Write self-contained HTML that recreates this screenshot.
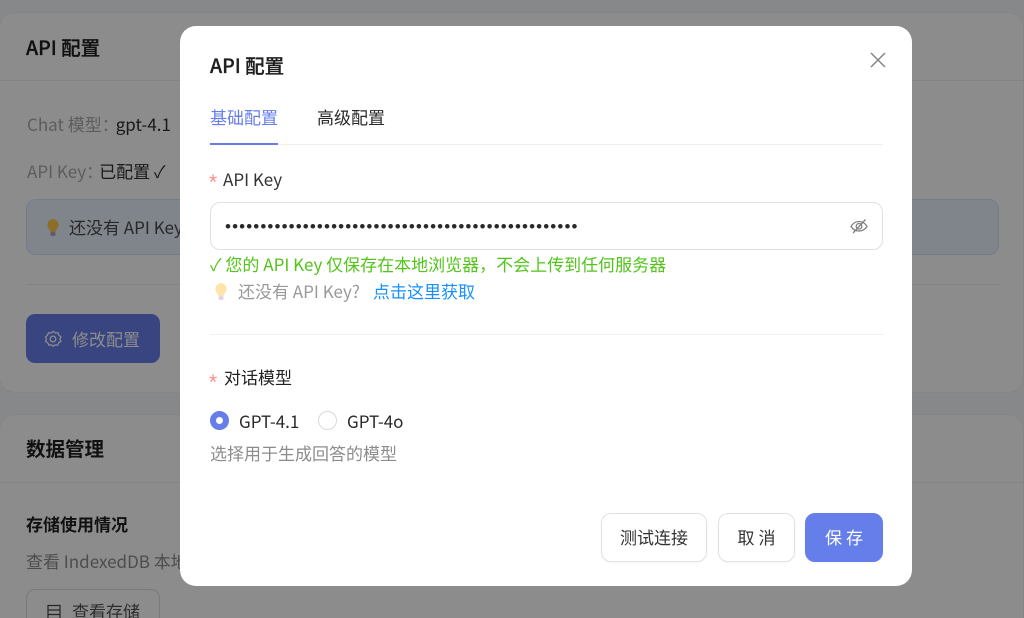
<!DOCTYPE html>
<html lang="zh-CN"><head><meta charset="utf-8"><title>API 配置</title>
<style>
html,body{margin:0;padding:0;width:1024px;height:618px;overflow:hidden;background:#f5f7fa}
body{position:relative;font-family:"Noto Sans CJK SC","Liberation Sans",sans-serif;font-size:17px;color:#2a2a2a}
.a{position:absolute;box-sizing:border-box}
.t{position:absolute;white-space:nowrap;line-height:24px}
.card{background:#fff;border:1px solid #f2f3f6;border-radius:16px;left:-1px;width:1025px}
.line{position:absolute;height:1px}
.star{position:absolute;font-family:"Liberation Sans",sans-serif;font-size:21px;line-height:24px;color:#ff8a8a}
.btn{border-radius:10px;position:absolute;box-sizing:border-box;text-align:center;background:#fff;border:1.5px solid #e2e2e2;line-height:46px;color:#333;box-shadow:0 1px 2px rgba(0,0,0,.04)}
</style></head><body>
<div class="a card" style="top:12px;height:381px"></div>
<div class="line" style="left:0;top:80px;width:1024px;background:#f0f0f0"></div>
<div class="t" style="left:26px;top:35px;font-size:19.500px;font-weight:500;-webkit-text-stroke:.3px #1f1f1f;color:#1f1f1f">API 配置</div>
<div class="t" style="left:27px;top:112px;color:#aaa">Chat 模型：<span style="color:#2f2f2f;margin-left:-3px">gpt-4.1</span></div>
<div class="t" style="left:27px;top:159px;color:#aaa">API Key：<span style="color:#2f2f2f;margin-left:-4px">已配置 ✓</span></div>
<div class="a" style="left:26px;top:199px;width:973px;height:56px;background:#e9f2ff;border:1px solid #d0e2ff;border-radius:10px"></div>
<svg class="a" style="left:45px;top:218px" width="16" height="20" viewBox="0 0 16 20"><path d="M8 1a6 6 0 0 0-4 10c1 1 1.500 2 1.500 3h5c0-1 .5-2 1.500-3A6 6 0 0 0 8 1z" fill="#ffc94a"/><rect x="5.500" y="14" width="5" height="4" rx="1" fill="#b5a3c4"/></svg>
<div class="t" style="left:69px;top:215px;color:#4a4a4a">还没有 API Key</div>
<div class="line" style="left:26px;top:284px;width:973px;background:#f0f0f0"></div>
<div class="a" style="left:26px;top:314px;width:134px;height:49px;background:#667eea;border-radius:9px"></div>
<svg class="a" style="left:44px;top:330px" width="18" height="18" viewBox="0 0 18 18" fill="none" stroke="#fff" stroke-width="1.300"><path d="M9 1.500l2 1.700 2.700-.3 1 2.500 2 1.700-1 2.300 1 2.300-2.300 1.300-1 2.400-2.700-.3-1.700 1.400-1.700-1.400-2.700.3-1-2.400L1.300 11.700l1-2.300-1-2.300 2-1.700 1-2.500 2.700.3z" transform="translate(.2 -.2)"/><circle cx="9" cy="9" r="2.800"/></svg>
<div class="t" style="left:72px;top:327px;color:#fff">修改配置</div>
<div class="a card" style="top:414px;height:230px"></div>
<div class="line" style="left:0;top:482px;width:1024px;background:#f0f0f0"></div>
<div class="t" style="left:26px;top:436px;font-size:19.500px;font-weight:700;color:#1f1f1f">数据管理</div>
<div class="t" style="left:26px;top:512px;font-size:17px;font-weight:700;color:#1f1f1f">存储使用情况</div>
<div class="t" style="left:26px;top:549px;color:#8c8c8c">查看 IndexedDB 本地</div>
<div class="a" style="left:26px;top:589px;width:134px;height:49px;border:1px solid #dcdcdc;border-radius:9px"></div>
<svg class="a" style="left:46px;top:604px" width="16" height="16" viewBox="0 0 16 16" fill="none" stroke="#444" stroke-width="1.200"><path d="M2 1.500h12v13H2zM2 6h12M2 10.500h12M5 3.800h.1M5 8.200h.1"/></svg>
<div class="t" style="left:72px;top:599px;color:#555">查看存储</div>
<div class="a" style="left:0;top:0;width:1024px;height:618px;background:rgba(0,0,0,.45)"></div>

<div class="a" style="left:180px;top:26px;width:732px;height:560px;background:#fff;border-radius:16px"></div>
<div class="t" style="left:210px;top:53px;font-size:19.500px;font-weight:500;-webkit-text-stroke:.3px #1f1f1f;color:#1f1f1f">API 配置</div>
<svg class="a" style="left:869px;top:51px" width="18" height="18" viewBox="0 0 18 18" stroke="#858585" stroke-width="1.500" fill="none"><path d="M2 2l14 14M16 2L2 16"/></svg>
<div class="t" style="left:210px;top:105px;color:#667eea">基础配置</div>
<div class="t" style="left:317px;top:105px;color:#2a2a2a">高级配置</div>
<div class="line" style="left:210px;top:144px;width:673px;background:#efefef"></div>
<div class="a" style="left:210px;top:143px;width:68px;height:2px;background:#667eea"></div>
<div class="star" style="left:209px;top:171px">*</div>
<div class="t" style="left:223px;top:167px;color:#333">API Key</div>
<div class="a" style="left:210px;top:202px;width:673px;height:48px;border:1.500px solid #e0e0e0;border-radius:10px"></div>
<div class="t" style="left:225px;top:215px;font-family:'Liberation Sans',sans-serif;font-size:17px;letter-spacing:1.120px;color:#2a2a2a">••••••••••••••••••••••••••••••••••••••••••••••••••</div>
<svg class="a" style="left:850px;top:217px" width="18" height="18" viewBox="0 0 18 18" fill="none" stroke="#808080" stroke-width="1.300"><path d="M1 9.500c2-3.500 4.700-5 8-5s6 1.500 8 5c-2 3-4.700 4.500-8 4.500s-6-1.500-8-4.500z"/><circle cx="9" cy="9.300" r="2.800"/><path d="M15.500 2.500L3 16"/></svg>
<div class="t" style="left:210px;top:252px;color:#52c41a">✓ 您的 API Key 仅保存在本地浏览器，不会上传到任何服务器</div>
<svg class="a" style="left:213px;top:282px" width="16" height="20" viewBox="0 0 16 20"><path d="M8 1a6 6 0 0 0-4 10c1 1 1.500 2 1.500 3h5c0-1 .5-2 1.500-3A6 6 0 0 0 8 1z" fill="#ffe3a8"/><rect x="5.500" y="14" width="5" height="4" rx="1" fill="#e0d8e6"/></svg>
<div class="t" style="left:238px;top:279px;color:#999">还没有 API Key?</div>
<div class="t" style="left:373px;top:279px;color:#1890ff">点击这里获取</div>
<div class="line" style="left:210px;top:334px;width:673px;background:#f0f0f0"></div>
<div class="star" style="left:209px;top:371px">*</div>
<div class="t" style="left:224px;top:365px;color:#222">对话模型</div>
<div class="a" style="left:210px;top:411px;width:19px;height:19px;border-radius:50%;border:6px solid #667eea;background:#fff"></div>
<div class="t" style="left:239px;top:409px;color:#2a2a2a">GPT-4.1</div>
<div class="a" style="left:318px;top:411px;width:19px;height:19px;border-radius:50%;border:1px solid #d9d9d9;background:#fff"></div>
<div class="t" style="left:347px;top:409px;color:#2a2a2a">GPT-4o</div>
<div class="t" style="left:210px;top:441px;color:#8c8c8c">选择用于生成回答的模型</div>
<div class="btn" style="left:601px;top:513px;width:106px;height:49px">测试连接</div>
<div class="btn" style="left:718px;top:513px;width:77px;height:49px;letter-spacing:4px;text-indent:4px">取消</div>
<div class="btn" style="left:805px;top:513px;width:78px;height:49px;background:#667eea;border-color:#667eea;color:#fff;letter-spacing:4px;text-indent:4px">保存</div>
</body></html>
